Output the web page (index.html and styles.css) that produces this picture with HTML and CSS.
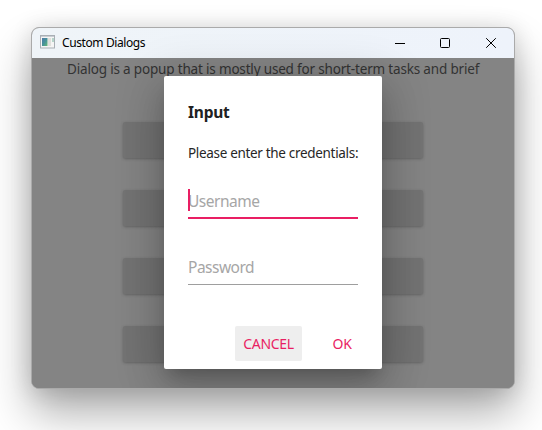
FILE: index.html
```html
<!DOCTYPE html>
<html lang="en">
<head>
<meta charset="utf-8">
<title>Custom Dialogs</title>
<link rel="stylesheet" href="styles.css">
</head>
<body>
<main class="window">
  <header class="titlebar">
    <svg class="app-icon" width="15" height="14" viewBox="0 0 15 14">
      <defs><linearGradient id="pane" x1="0" y1="0" x2="1" y2="1"><stop offset="0" stop-color="#4f78a8"/><stop offset=".5" stop-color="#46929a"/><stop offset="1" stop-color="#67b776"/></linearGradient></defs>
      <rect x=".5" y=".5" width="14" height="12.5" fill="#f5f5f5" stroke="#a9afb5"/>
      <path d="M1 1.5h13" stroke="#c9ced3"/>
      <rect x="2" y="3" width="5.5" height="8" fill="url(#pane)"/>
      <rect x="8" y="3" width="3" height="8" fill="#e0e0dc"/>
      <rect x="12" y="3" width="2" height="4" fill="#b5d5ca"/>
    </svg>
    <span class="title">Custom Dialogs</span>
    <div class="controls">
      <svg width="10" height="10" viewBox="0 0 10 10"><path d="M0 5.5h10"/></svg>
      <svg width="10" height="10" viewBox="0 0 10 10"><rect x=".5" y=".5" width="9" height="9" rx="1"/></svg>
      <svg class="close" width="10" height="10" viewBox="0 0 10 10"><path d="M.2.2l9.6 9.6M9.8.2L.2 9.8"/></svg>
    </div>
  </header>
  <section class="content">
    <p class="intro">Dialog is a popup that is mostly used for short-term tasks and brief</p>
    <div class="buttons"><i></i><i></i><i></i><i></i></div>
    <div class="dialog">
      <h1>Input</h1>
      <p class="prompt">Please enter the credentials:</p>
      <div class="field active">Username</div>
      <div class="field">Password</div>
      <div class="actions"><button class="cancel">CANCEL</button><button class="ok">OK</button></div>
    </div>
  </section>
</main>
</body>
</html>
```
FILE: styles.css
```css
* { box-sizing: border-box; }
body {
  margin: 0;
  height: 430px;
  padding: 27px 0 0 31px;
  overflow: hidden;
  background: #fff;
  font-family: "Noto Sans", "Open Sans", sans-serif;
}
.window {
  width: 484px;
  height: 362px;
  border: 1px solid #aaa;
  border-radius: 8px;
  overflow: hidden;
  background: #848484;
  box-shadow: 0 24px 44px rgba(0, 0, 0, .32), 0 2px 22px rgba(0, 0, 0, .14);
}
.titlebar {
  height: 30px;
  display: flex;
  align-items: center;
  padding: 0 18px 0 8px;
  background: linear-gradient(90deg, #eff4f8, #eef3fb);
}
.app-icon { display: block; margin-top: -2px; }
.title {
  margin-left: 7px;
  font-size: 12px;
  line-height: 18px;
  letter-spacing: -.4px;
  color: #000;
}
.controls { display: flex; gap: 35px; margin: -1px 0 0 auto; }
.controls svg { display: block; width: 10px; fill: none; stroke: #000; stroke-width: 1; overflow: visible; }
.controls .close { margin-left: 1px; }
.content { position: relative; height: 330px; background: #848484; }
.intro {
  margin: 0;
  padding: 1px 0 0 35px;
  font-size: 13.5px;
  line-height: 20px;
  letter-spacing: -.175px;
  white-space: nowrap;
  color: #333;
}
.buttons { display: grid; gap: 32px; padding: 43px 0 0 91px; }
.buttons i {
  width: 300px;
  height: 36px;
  border-radius: 2px;
  background: #737373;
  box-shadow: 0 1px 3px rgba(0, 0, 0, .25);
}
.dialog {
  position: absolute;
  left: 132px;
  top: 18px;
  width: 218px;
  height: 293px;
  padding: 24px;
  border-radius: 2px;
  background: #fff;
  box-shadow: 0 11px 15px -7px rgba(0, 0, 0, .2), 0 20px 38px 3px rgba(0, 0, 0, .14), 0 7px 46px 8px rgba(0, 0, 0, .14);
}
h1 { margin: 0; font-size: 15.5px; line-height: 24px; letter-spacing: -.22px; color: #212121; }
.prompt { margin: 19px 0 0; font-size: 13.5px; line-height: 20px; letter-spacing: -.32px; white-space: nowrap; color: #262626; }
.field {
  height: 32px;
  margin-top: 34px;
  border-bottom: 1px solid #9e9e9e;
  font-size: 15.5px;
  line-height: 28px;
  letter-spacing: -.5px;
  color: #a6a6a6;
}
.field.active {
  position: relative;
  margin-top: 24px;
  border-bottom: 2px solid #e91e63;
}
.field.active::before {
  content: "";
  position: absolute;
  left: 0;
  top: 2px;
  width: 2px;
  height: 22px;
  background: #e91e63;
}
.actions { display: flex; justify-content: flex-end; gap: 22px; margin: 41px -2px 0 0; }
button {
  height: 35px;
  padding: 0;
  border: 0;
  border-radius: 2px;
  background: transparent;
  font: 14px/20px "Noto Sans", "Open Sans", sans-serif;
  letter-spacing: -.3px;
  color: #e91e63;
}
.cancel { width: 67px; background: #eee; }
.ok { width: 36px; }
```
